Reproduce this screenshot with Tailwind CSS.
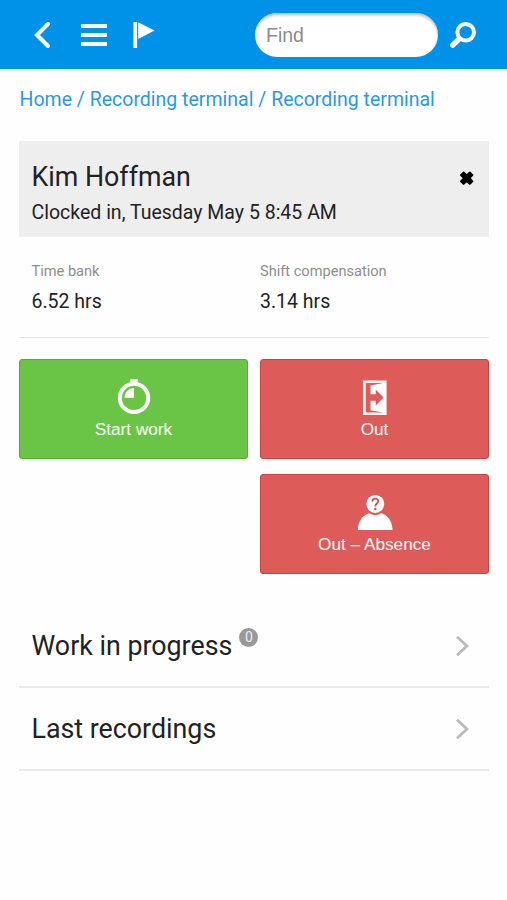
<!DOCTYPE html>
<html lang="en">
<head>
    <meta charset="UTF-8">
    <meta name="viewport" content="width=device-width, initial-scale=1.0">
    <title>Recording terminal</title>
    <script src="https://cdn.jsdelivr.net/npm/@tailwindcss/browser@4"></script>
</head>
<body class="bg-[#fefefe] text-[#222] font-[Roboto,sans-serif]">
    <header class="bg-[#0092e8] h-[69px] pl-[34px] pr-[31px] pt-px flex items-center">
        <a href="#" aria-label="Back">
            <svg class="block w-[17px] h-[26px]" viewBox="0 0 17 26" fill="none" stroke="#fff" stroke-width="4" stroke-linecap="round" stroke-linejoin="miter"><path d="M14 2L3 13L14 24"/></svg>
        </a>
        <a href="#" aria-label="Menu" class="ml-[30px]">
            <svg class="block w-[26px] h-[26px]" viewBox="0 0 26 26" fill="#fff"><path d="M0 2h26v4H0zM0 11h26v4H0zM0 20h26v4H0z"/></svg>
        </a>
        <a href="#" aria-label="Flag" class="ml-[26px]">
            <svg class="block w-[22px] h-[26px]" viewBox="0 0 22 26" fill="#fff"><path d="M.4 0h3.7v26H.4zM5.200 .3L21.5 8.6L5.200 17z"/></svg>
        </a>
        <input type="search" placeholder="Find" class="ml-auto w-[183px] h-11 rounded-full bg-white px-[11px] pt-px text-[19.5px] font-['Liberation_Sans',sans-serif] placeholder:text-[#8c8c8c] shadow-[inset_0_2px_3px_#bbb]">
        <a href="#" aria-label="Search" class="ml-[12px]">
            <svg class="block w-[26px] h-[26px]" viewBox="0 0 26 26" fill="none" stroke="#fff"><circle cx="15.7" cy="10.3" r="8.3" stroke-width="4"/><path d="M2.8 23.2L9 17" stroke-width="5.4" stroke-linecap="round"/></svg>
        </a>
    </header>

    <main class="px-[19px]">
        <nav class="h-[72px] pt-[16px] pl-[0.5px] text-[19.5px] leading-[30px] text-[#2e97e2] whitespace-nowrap">
            <a href="#">Home</a> / <a href="#">Recording terminal</a> / <a href="#">Recording terminal</a>
        </nav>

        <section class="w-[470px] h-[96px] bg-[#eee] pl-[12.5px] pr-[15px] pt-[20px] flex justify-between">
            <div>
                <h1 class="text-[26.8px] leading-[32px]">Kim Hoffman</h1>
                <p class="mt-[5px] text-[19.5px] leading-[30px]">Clocked in, Tuesday May 5 8:45 AM</p>
            </div>
            <button aria-label="Close" class="mt-[10px] h-[14px]">
                <svg class="block w-[14px] h-[14px]" viewBox="0 0 14 14" fill="#000" stroke="#000" stroke-width="1.9" stroke-linejoin="round"><path d="M3.600 1.500L6.700 4.400L9.800 1.500L12.400 4.100L9.500 7.200L12.400 10.300L9.800 12.900L6.700 10L3.600 12.900L1 10.300L3.900 7.200L1 4.100z"/></svg>
            </button>
        </section>

        <dl class="w-[470px] h-[101px] border-b border-[#e4e4e4] grid grid-cols-2 gap-x-[12px] pt-[24px]">
            <div class="pl-[12.5px]">
                <dt class="text-[14.6px] leading-[20px] text-[#8e8e8e]">Time bank</dt>
                <dd class="mt-[6px] text-[19.5px] leading-[30px]">6.52 hrs</dd>
            </div>
            <div>
                <dt class="text-[14.6px] leading-[20px] text-[#8e8e8e]">Shift compensation</dt>
                <dd class="mt-[6px] text-[19.5px] leading-[30px]">3.14 hrs</dd>
            </div>
        </dl>

        <section class="w-[470px] mt-[21px] grid grid-cols-2 gap-x-[12px] gap-y-[15px] font-['Liberation_Sans',sans-serif] text-[17.2px] leading-[20px] text-white">
            <button class="h-[100px] rounded-[3px] border border-[#55ab35] bg-[#6ac547] flex flex-col items-center pt-[19px]">
                <svg class="block w-[36px] h-[36px]" viewBox="0 0 36 36"><path d="M14.300 .2h7.400v4.500h-7.400z" fill="#fff"/><circle cx="18" cy="18.900" r="14.2" fill="none" stroke="#fff" stroke-width="4"/><path d="M17.900 9v9.800H8.500A9.600 9.600 0 0 1 17.900 9z" fill="#fff"/></svg>
                <span class="mt-[4px]">Start work</span>
            </button>
            <button class="h-[100px] rounded-[3px] border border-[#cc4240] bg-[#dd5b59] flex flex-col items-center pt-[19px]">
                <!-- door with exit arrow -->
                <svg class="block w-[36px] h-[36px]" viewBox="0 0 36 36"><path d="M6 1.500h23.600v34.500H6z" fill="#fff"/><path d="M8.700 4H26.400L13.500 6.500V15.300H18.800V10.700L26.600 18.600L18.800 26.600V21.800H13.500V31.200L26.400 33.600H8.700z" fill="#dd5b59"/></svg>
                <span class="mt-[4px]">Out</span>
            </button>
            <button class="col-start-2 h-[100px] rounded-[3px] border border-[#cc4240] bg-[#dd5b59] flex flex-col items-center pt-[19px]">
                <!-- person with unknown face -->
                <svg class="block w-[36px] h-[36px]" viewBox="0 0 36 36"><path d="M.8 36C1.200 27 5.500 21.200 12.200 19.200C16 21.600 20.500 21.600 24.400 19.200C31 21.200 35.200 27 35.600 36z" fill="#fff"/><circle cx="18.300" cy="9.900" r="9" fill="#fff"/><path d="M15.300 7.600C15.300 3.600 21.300 3.600 21.300 7.100C21.300 9.600 18.300 9.500 18.300 12.400" fill="none" stroke="#d64c4a" stroke-width="1.800"/><circle cx="18.300" cy="14.900" r="1.200" fill="#d64c4a"/></svg>
                <span class="mt-[4px]">Out – Absence</span>
            </button>
        </section>

        <ul class="w-[470px] mt-[31px] text-[26.8px]">
            <li class="h-[83px] border-b-2 border-[#e9e9e9] pl-[12.5px] pr-[19px] flex items-center">
                <span class="pt-[2px]">Work in progress</span>
                <span class="ml-[7px] mb-[16px] size-[19px] rounded-full bg-[#999] text-[#eee] text-[14px] leading-[19px] text-center">0</span>
                <svg class="ml-auto block w-[15px] h-[22px]" viewBox="0 0 15 22" fill="none" stroke="#bbb" stroke-width="2.800"><path d="M2 1.800L12 11L2 20.200"/></svg>
            </li>
            <li class="h-[83px] border-b-2 border-[#e9e9e9] pl-[12.5px] pr-[19px] flex items-center">
                <span class="pt-[2px]">Last recordings</span>
                <svg class="ml-auto block w-[15px] h-[22px]" viewBox="0 0 15 22" fill="none" stroke="#bbb" stroke-width="2.800"><path d="M2 1.800L12 11L2 20.200"/></svg>
            </li>
        </ul>
    </main>
</body>
</html>
